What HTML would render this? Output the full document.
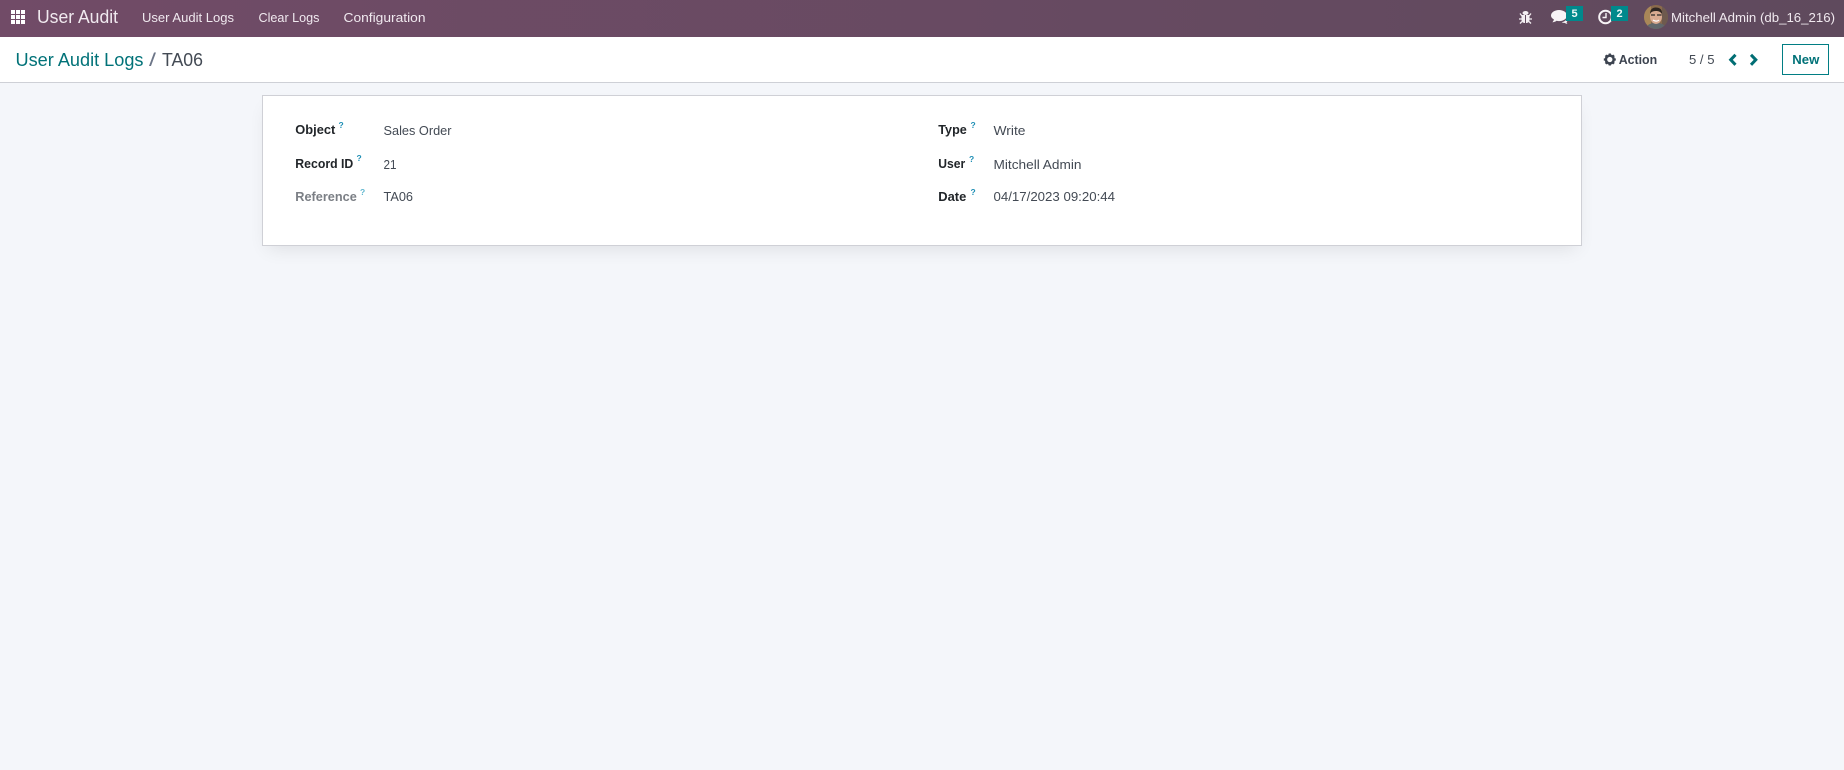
<!DOCTYPE html>
<html lang="en">
<head>
<meta charset="utf-8">
<title>User Audit</title>
<style>
html,body{margin:0;padding:0;width:1844px;height:770px;overflow:hidden;background:#f4f6fa}
svg{display:block;position:absolute;left:0;top:0}
text{font-family:"Liberation Sans",sans-serif}
.card{position:absolute;left:262px;top:95px;width:1318px;height:149px;background:#fff;border:1px solid #cfd0d6;box-shadow:0 8px 18px -6px rgba(0,0,0,.10)}
</style>
</head>
<body>
<div class="card"></div>
<svg width="1844" height="770" viewBox="0 0 1844 770" xmlns="http://www.w3.org/2000/svg">
<defs>
<linearGradient id="nav" x1="0" x2="1" y1="0" y2="0"><stop offset="0" stop-color="#714b67"/><stop offset="1" stop-color="#5f4a5d"/></linearGradient>
<clipPath id="av"><circle cx="1656" cy="17" r="12"/></clipPath>
</defs>
<rect x="0" y="0" width="1844" height="37" fill="url(#nav)"/>
<rect x="0" y="37" width="1844" height="45" fill="#fff"/>
<rect x="0" y="82" width="1844" height="1" fill="#ced0d6"/>

<!-- apps grid -->
<g fill="#fff">
<rect x="11" y="10" width="4" height="4"/><rect x="16" y="10" width="4" height="4"/><rect x="21" y="10" width="4" height="4"/>
<rect x="11" y="15" width="4" height="4"/><rect x="16" y="15" width="4" height="4"/><rect x="21" y="15" width="4" height="4"/>
<rect x="11" y="20" width="4" height="4"/><rect x="16" y="20" width="4" height="4"/><rect x="21" y="20" width="4" height="4"/>
</g>

<!-- nav text -->
<g fill="#f0e9ef">
<text x="37" y="23" font-size="18" textLength="81" lengthAdjust="spacingAndGlyphs">User Audit</text>
<text x="142" y="22" font-size="13" textLength="92" lengthAdjust="spacingAndGlyphs">User Audit Logs</text>
<text x="258.500" y="22" font-size="13" textLength="61" lengthAdjust="spacingAndGlyphs">Clear Logs</text>
<text x="343.500" y="22" font-size="13" textLength="82" lengthAdjust="spacingAndGlyphs">Configuration</text>
<text x="1671" y="22" font-size="13" textLength="164" lengthAdjust="spacingAndGlyphs">Mitchell Admin (db_16_216)</text>
</g>

<!-- bug icon -->
<g fill="#f4eff3" stroke="none">
<ellipse cx="1525.500" cy="13" rx="3" ry="2"/>
<path d="M1521.500 15h3.500v8c-2.200 0-3.500-1.300-3.500-3.500zM1526 15h3.500v4.500c0 2.200-1.300 3.500-3.500 3.500z"/>
</g>
<g stroke="#f4eff3" stroke-width="1.300" fill="none">
<path d="M1522 16l-2-2.500M1529 16l2-2.500M1521.500 19h-2.500M1529.500 19h2.500M1522 21.500l-2 2M1529 21.500l2 2"/>
</g>

<!-- comments icon -->
<path fill="#f7f3f6" d="M1559 10c4.500 0 8 2.500 8 5.600 0 3-3.500 5.500-8 5.500-.9 0-1.700-.1-2.400-.3-1 .8-2.500 1.500-4.300 1.500.9-.8 1.500-1.900 1.600-2.900-1.800-1-2.900-2.300-2.900-3.800 0-3.100 3.500-5.600 8-5.600z"/>
<path fill="#f7f3f6" d="M1566.500 19.500c-1 1.400-2.700 2.400-4.800 2.800 1 .5 2 .7 3 .6.800.6 1.800 1 2.800 1-.5-.5-.8-1.100-.9-1.800.5-.4.700-.9.700-1.500z"/>

<!-- clock icon -->
<circle cx="1605.500" cy="17" r="6.300" fill="none" stroke="#f7f3f6" stroke-width="2"/>
<path d="M1606 13v4.500h-3.500" fill="none" stroke="#f7f3f6" stroke-width="1.400"/>

<!-- badges -->
<rect x="1566" y="6" width="17" height="15" fill="#00898c"/>
<rect x="1611" y="6" width="17" height="15" fill="#00898c"/>
<text x="1571.500" y="17" font-size="11" font-weight="bold" fill="#eef8f8">5</text>
<text x="1616.500" y="17" font-size="11" font-weight="bold" fill="#eef8f8">2</text>

<!-- avatar -->
<g clip-path="url(#av)">
<rect x="1644" y="5" width="24" height="24" fill="#8a6a4c"/>
<rect x="1644" y="5" width="7" height="24" fill="#a98758"/>
<rect x="1662" y="5" width="6" height="24" fill="#6e5a4e"/>
<path d="M1646 29c1-5 5-6 10-6s9 1 10 6z" fill="#60686c"/>
<ellipse cx="1656" cy="16.500" rx="6" ry="7.500" fill="#d9ab92"/>
<path d="M1650 14c0-5 3-6.500 6-6.500s6.500 1.500 6 6.500c-1.500-2-3-3-6-3s-5 1-6 3z" fill="#2e2622"/>
<path d="M1651 15h4M1657 15h4.500" stroke="#2b2a2a" stroke-width="1.300"/>
<path d="M1653 20c2 1.500 4.500 1.500 6 0" stroke="#fff" stroke-width="1.200" fill="none"/>
</g>

<!-- breadcrumb -->
<text x="15.500" y="66" font-size="18" fill="#017278" textLength="128" lengthAdjust="spacingAndGlyphs">User Audit Logs</text>
<text x="149" y="66" font-size="18" fill="#6d7688" textLength="7" lengthAdjust="spacingAndGlyphs">/</text>
<text x="162" y="66" font-size="18" fill="#434a54" textLength="41" lengthAdjust="spacingAndGlyphs">TA06</text>

<!-- action -->
<g transform="translate(1609.800 59.500)">
<circle r="3.900" fill="none" stroke="#3d4450" stroke-width="2.500"/>
<g stroke="#3d4450" stroke-width="2.300">
<path d="M0-6V-4M0 4V6M-6 0H-4M4 0H6M-4.200-4.200L-3-3M3 3L4.200 4.200M-4.200 4.200L-3 3M3-3L4.200-4.200"/>
</g>
</g>
<text x="1618.700" y="64" font-size="13" font-weight="bold" fill="#3d4450" textLength="38.500" lengthAdjust="spacingAndGlyphs">Action</text>
<text x="1689" y="64" font-size="13" fill="#434a54" textLength="25.500" lengthAdjust="spacingAndGlyphs">5 / 5</text>

<!-- chevrons -->
<path d="M1735.500 54.800l-4.800 5 4.800 5" fill="none" stroke="#016e74" stroke-width="3"/>
<path d="M1751 54.800l4.800 5-4.800 5" fill="none" stroke="#016e74" stroke-width="3"/>

<!-- new button -->
<rect x="1782.500" y="44.500" width="46" height="30" fill="#fff" stroke="#017e84" stroke-width="1"/>
<text x="1792.300" y="64" font-size="13" font-weight="bold" fill="#017278" textLength="27" lengthAdjust="spacingAndGlyphs">New</text>

<!-- form labels -->
<g font-size="13" font-weight="bold" fill="#212529">
<text x="295.300" y="134" textLength="40" lengthAdjust="spacingAndGlyphs">Object</text>
<text x="295.300" y="168" textLength="58" lengthAdjust="spacingAndGlyphs">Record ID</text>
<text x="938.300" y="134" textLength="28.500" lengthAdjust="spacingAndGlyphs">Type</text>
<text x="938.300" y="168" textLength="27" lengthAdjust="spacingAndGlyphs">User</text>
<text x="938.300" y="201" textLength="28" lengthAdjust="spacingAndGlyphs">Date</text>
</g>
<text x="295.300" y="201" font-size="13" font-weight="bold" fill="#7b7f85" textLength="61.500" lengthAdjust="spacingAndGlyphs">Reference</text>

<!-- help marks -->
<g font-size="8.500" font-weight="bold" fill="#1f8fb5">
<text x="338.500" y="128">?</text>
<text x="356.500" y="161">?</text>
<text x="360" y="195" fill="#62b8d0">?</text>
<text x="970.500" y="128">?</text>
<text x="969" y="162">?</text>
<text x="970.500" y="195">?</text>
</g>

<!-- form values -->
<g font-size="13" fill="#434a54">
<text x="383.500" y="135" textLength="68" lengthAdjust="spacingAndGlyphs">Sales Order</text>
<text x="383.500" y="169" textLength="13" lengthAdjust="spacingAndGlyphs">21</text>
<text x="383.500" y="201" textLength="29.500" lengthAdjust="spacingAndGlyphs">TA06</text>
<text x="993.500" y="135" textLength="32" lengthAdjust="spacingAndGlyphs">Write</text>
<text x="993.500" y="169" textLength="88" lengthAdjust="spacingAndGlyphs">Mitchell Admin</text>
<text x="993.500" y="201" textLength="121.500" lengthAdjust="spacingAndGlyphs">04/17/2023 09:20:44</text>
</g>
</svg>
</body>
</html>
